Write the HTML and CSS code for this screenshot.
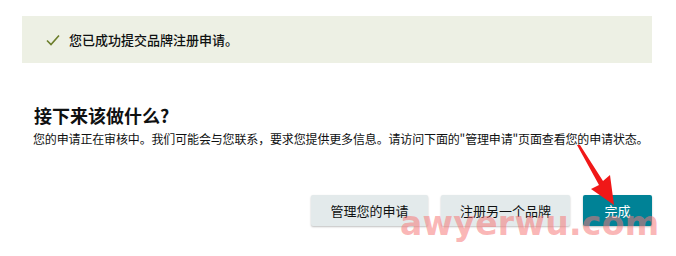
FILE: index.html
```html
<!DOCTYPE html>
<html lang="zh-CN">
<head>
<meta charset="utf-8">
<link rel="stylesheet" href="styles.css">
</head>
<body>
<div class="page">
  <div class="alert">
    <svg class="check" width="14" height="12" viewBox="0 0 14 12"><path d="M1 6.5 L5 10.5 L13 1.5" fill="none" stroke="#6b7d2a" stroke-width="1.6"/></svg>
    <span class="alert-text">您已成功提交品牌注册申请。</span>
  </div>
  <h2 class="title">接下来该做什么?</h2>
  <p class="desc">您的申请正在审核中。我们可能会与您联系，要求您提供更多信息。请访问下面的"管理申请"页面查看您的申请状态。</p>
  <div class="actions">
    <button class="btn">管理您的申请</button>
    <button class="btn">注册另一个品牌</button>
    <button class="btn primary">完成</button>
  </div>
  <svg class="arrow" width="60" height="70" viewBox="0 0 60 70"><polygon points="0,0 3,0 26,36 33,30 37,60 14,44 22,40" fill="#f01818"/></svg>
  <div class="watermark">awyerwu.com</div>
</div>
</body>
</html>
```
FILE: styles.css
```css
html, body { margin: 0; padding: 0; background: #fff; }
body { font-family: "Noto Sans CJK SC", "Noto Sans", sans-serif; color: #0f1111; }
.page { position: relative; width: 676px; height: 256px; overflow: hidden; }
.alert {
  margin: 16px 24px 0 22px;
  height: 47px;
  background: #edf0e4;
  display: flex;
  align-items: center;
  padding-left: 24px;
  box-sizing: border-box;
}
.check { margin-right: 9px; margin-top: 1px; }
.alert-text { font-size: 13px; font-weight: 500; color: #0f1111; }
.title { margin: 40px 0 0 34px; font-size: 18px; font-weight: 700; line-height: 24px; }
.desc { margin: 3px 0 0 33px; font-size: 12px; line-height: 18px; color: #0f1111; letter-spacing: -0.15px; }
.actions { display: flex; justify-content: flex-end; gap: 13px; margin: 47px 24px 0 0; }
.btn {
  height: 31px; border: none; border-radius: 2px;
  background: #e3eaeb; color: #0f1111;
  font-family: "Noto Sans CJK SC", sans-serif; font-size: 13px;
  box-shadow: 0 1px 2px rgba(0,0,0,0.25);
  padding: 0; width: 117px;
}
.btn:nth-child(2) { width: 129px; }
.btn.primary { width: 69px; background: #008296; color: #fff; }
.arrow { position: absolute; left: 577px; top: 145px; }
.watermark {
  position: absolute; left: 400px; top: 204px;
  font-family: "DejaVu Sans", sans-serif; font-weight: 700; font-size: 33px; line-height: 40px;
  color: rgba(246, 120, 120, 0.55); letter-spacing: 0.3px;
  pointer-events: none;
}
```
